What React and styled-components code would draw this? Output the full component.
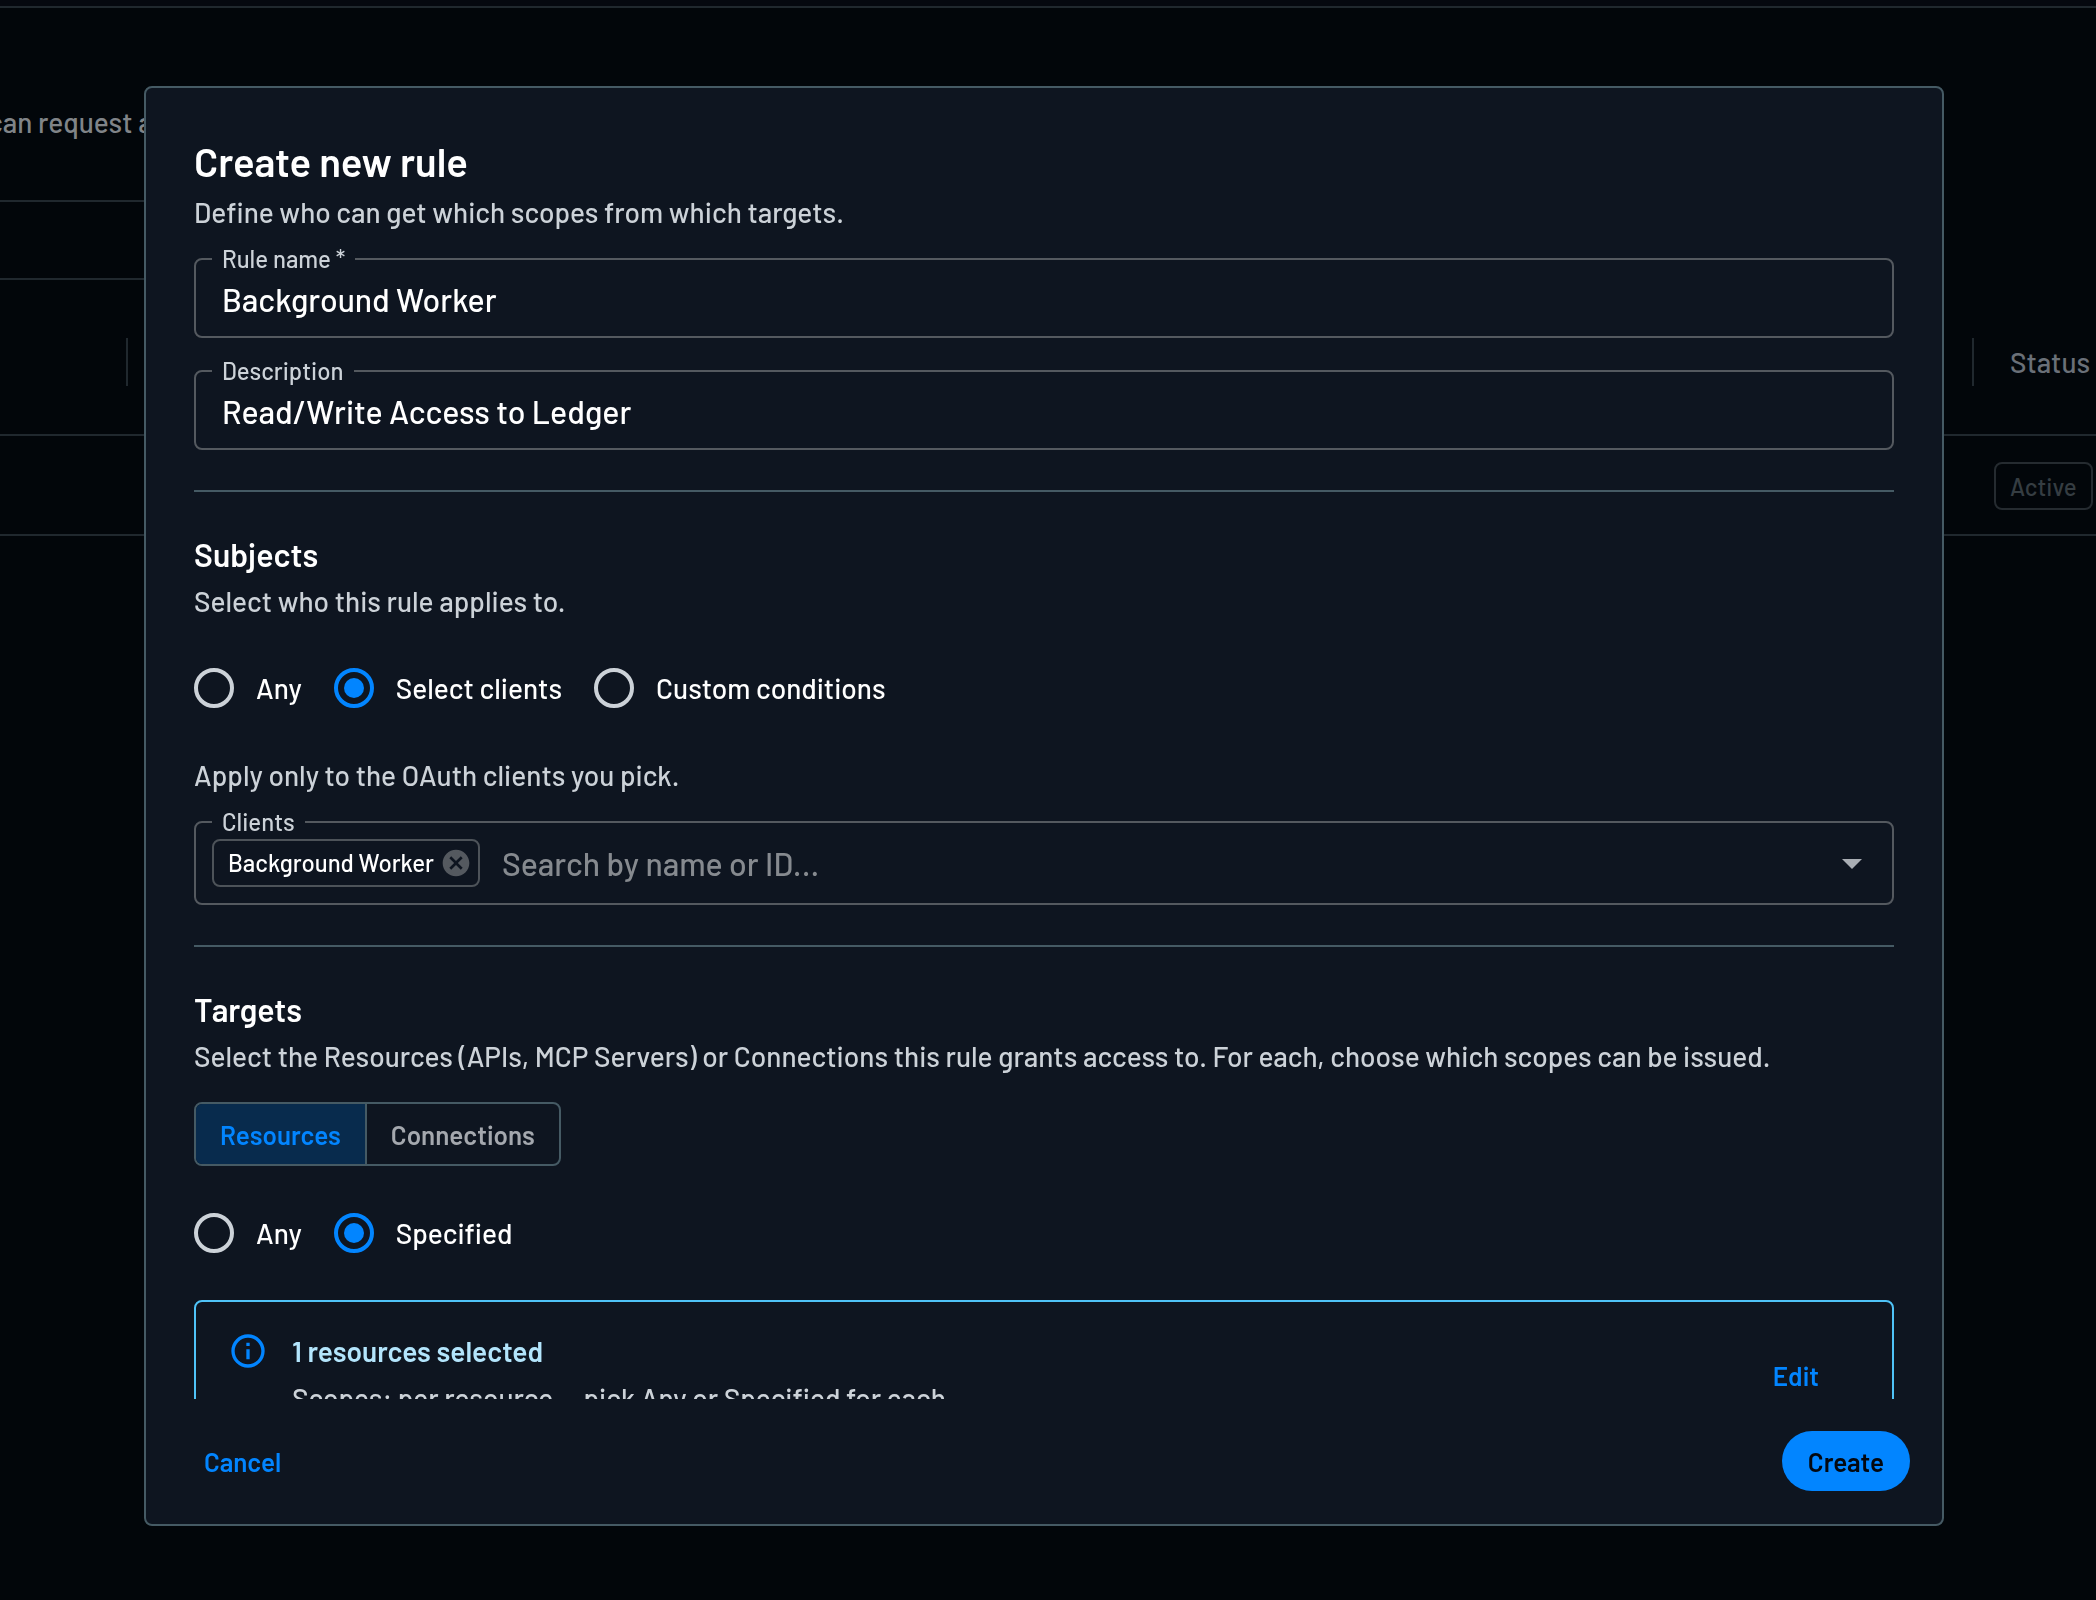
import React, { useState } from 'react';
import styled, { createGlobalStyle, css } from 'styled-components';

const colors = {
  page: '#02060a',
  paper: '#0e1520',
  line: '#455a64',
  dimLine: '#20282e',
  outline: '#54595f',
  text: '#ffffff',
  muted: '#ccd2d8',
  blue: '#0285ff',
};

function OutlinedField({ id, label, ...inputProps }) {
  return (
    <Field>
      <FieldLabel htmlFor={id}>{label}</FieldLabel>
      <FieldInput id={id} type="text" {...inputProps} />
    </Field>
  );
}

function RadioGroup({ name, legend, options, value, onChange }) {
  return (
    <RadioRow role="radiogroup" aria-label={legend}>
      {options.map((option) => (
        <RadioLabel key={option}>
          <Radio
            type="radio"
            name={name}
            checked={value === option}
            onChange={() => onChange(option)}
          />
          {option}
        </RadioLabel>
      ))}
    </RadioRow>
  );
}

function RulesPage() {
  return (
    <Page>
      <TopBar />
      <Intro>can request a</Intro>
      <Filters />
      <RulesTable>
        <thead>
          <tr>
            <HeadCell $width="128px">
              <HeadContent $divided />
            </HeadCell>
            <HeadCell>
              <HeadContent $divided />
            </HeadCell>
            <HeadCell $width="122px">
              <HeadContent>Status</HeadContent>
            </HeadCell>
          </tr>
        </thead>
        <tbody>
          <tr>
            <BodyCell />
            <BodyCell />
            <BodyCell>
              <StatusChip>Active</StatusChip>
            </BodyCell>
          </tr>
        </tbody>
      </RulesTable>
    </Page>
  );
}

function RuleDialog() {
  const [name, setName] = useState('Background Worker');
  const [description, setDescription] = useState('Read/Write Access to Ledger');
  const [subject, setSubject] = useState('Select clients');
  const [tab, setTab] = useState('Resources');
  const [target, setTarget] = useState('Specified');

  return (
    <Overlay>
      <Dialog role="dialog" aria-labelledby="dialog-title">
        <Content>
          <Title id="dialog-title">Create new rule</Title>
          <Text>Define who can get which scopes from which targets.</Text>
          <Fields>
            <OutlinedField
              id="rule-name"
              label="Rule name *"
              value={name}
              onChange={(e) => setName(e.target.value)}
            />
            <OutlinedField
              id="description"
              label="Description"
              value={description}
              onChange={(e) => setDescription(e.target.value)}
            />
          </Fields>

          <Divider />

          <SectionTitle>Subjects</SectionTitle>
          <Text>Select who this rule applies to.</Text>
          <RadioGroup
            name="subject"
            legend="Subjects"
            options={['Any', 'Select clients', 'Custom conditions']}
            value={subject}
            onChange={setSubject}
          />
          <Text>Apply only to the OAuth clients you pick.</Text>
          <ClientsField>
            <FieldLabel htmlFor="clients">Clients</FieldLabel>
            <Chip>
              Background Worker
              <ChipButton type="button" aria-label="Remove Background Worker">
                <svg viewBox="0 0 24 24" width="32" height="32" fill="currentColor">
                  <path d="M12 2C6.47 2 2 6.47 2 12s4.47 10 10 10 10-4.47 10-10S17.53 2 12 2zm5 13.59L15.59 17 12 13.41 8.41 17 7 15.59 10.59 12 7 8.41 8.41 7 12 10.59 15.59 7 17 8.41 13.41 12 17 15.59z" />
                </svg>
              </ChipButton>
            </Chip>
            <FieldInput id="clients" type="text" placeholder="Search by name or ID..." />
            <ArrowButton type="button" aria-label="Open">
              <svg viewBox="0 0 24 24" width="48" height="48" fill="currentColor">
                <path d="M7 10l5 5 5-5z" />
              </svg>
            </ArrowButton>
          </ClientsField>

          <Divider />

          <SectionTitle>Targets</SectionTitle>
          <Text>
            Select the Resources (APIs, MCP Servers) or Connections this rule grants access to. For
            each, choose which scopes can be issued.
          </Text>
          <Toggle>
            {['Resources', 'Connections'].map((item) => (
              <ToggleButton
                key={item}
                type="button"
                aria-pressed={tab === item}
                $active={tab === item}
                onClick={() => setTab(item)}>
                {item}
              </ToggleButton>
            ))}
          </Toggle>
          <RadioGroup
            name="target"
            legend="Targets"
            options={['Any', 'Specified']}
            value={target}
            onChange={setTarget}
          />
          <Alert>
            <InfoIcon viewBox="0 0 24 24">
              <path d="M11,9H13V7H11M12,20C7.59,20 4,16.41 4,12C4,7.59 7.59,4 12,4C16.41,4 20,7.59 20,12C20,16.41 16.41,20 12,20M12,2A10,10 0 0,0 2,12A10,10 0 0,0 12,22A10,10 0 0,0 22,12A10,10 0 0,0 12,2M11,17H13V11H11V17Z" />
            </InfoIcon>
            <AlertBody>
              <AlertTitle>1 resources selected</AlertTitle>
              <AlertText>Scopes: per resource — pick Any or Specified for each.</AlertText>
            </AlertBody>
            <Button type="button">Edit</Button>
          </Alert>
        </Content>
        <Actions>
          <Button type="button">Cancel</Button>
          <Button type="button" $filled>
            Create
          </Button>
        </Actions>
      </Dialog>
    </Overlay>
  );
}

function App() {
  return (
    <>
      <GlobalStyle />
      <RulesPage />
      <RuleDialog />
    </>
  );
}

const GlobalStyle = createGlobalStyle`
  * {
    box-sizing: border-box;
  }

  body {
    margin: 0;
    background: ${colors.page};
    color: ${colors.text};
    font-family: Barlow, Roboto, sans-serif;
    font-size: 28px;
    font-weight: 500;
    line-height: 40px;
  }

  button,
  input {
    font: inherit;
    color: inherit;
    background: none;
    border: 0;
    margin: 0;
    padding: 0;
  }

  h1,
  h2,
  p {
    margin: 0;
  }

  svg {
    display: block;
  }
`;

const Page = styled.main`
  min-height: 100vh;
  overflow: hidden;
`;

const TopBar = styled.header`
  height: 8px;
  background: #05080f;
  border-bottom: 2px solid ${colors.dimLine};
`;

const Intro = styled.p`
  margin: 94px 0 58px -12px;
  color: #808488;
`;

const Filters = styled.div`
  width: 60%;
  height: 80px;
  border: solid ${colors.dimLine};
  border-width: 2px 0;
`;

const RulesTable = styled.table`
  width: 100%;
  table-layout: fixed;
  border-collapse: separate;
  border-spacing: 0;
`;

const HeadCell = styled.th`
  width: ${({ $width }) => $width || 'auto'};
  padding: 58px 0 48px;
  border-bottom: 2px solid ${colors.dimLine};
  color: #6a7078;
  font-weight: 500;
  text-align: left;
`;

const HeadContent = styled.div`
  height: 48px;
  padding: 4px 0 0 36px;
  border-right: ${({ $divided }) => ($divided ? `2px solid ${colors.dimLine}` : 0)};
`;

const BodyCell = styled.td`
  height: 100px;
  padding: 2px 0 0 20px;
  border-bottom: 2px solid ${colors.dimLine};
`;

const StatusChip = styled.span`
  display: inline-block;
  padding: 5px 14px 3px;
  border: 2px solid #252b30;
  border-radius: 8px;
  color: #353d42;
  font-size: 24px;
  line-height: 36px;
  vertical-align: middle;
`;

const Overlay = styled.div`
  position: fixed;
  inset: 0;
  display: flex;
  padding: 86px 152px 74px 144px;
`;

const Dialog = styled.div`
  flex: 1;
  display: flex;
  flex-direction: column;
  min-width: 0;
  background: ${colors.paper};
  border: 2px solid ${colors.line};
  border-radius: 8px;
`;

const Content = styled.div`
  flex: 1;
  min-height: 0;
  padding: 48px 48px 0;
  overflow-y: auto;
  scrollbar-width: none;
`;

const Title = styled.h1`
  margin-bottom: 6px;
  font-size: 40px;
  font-weight: 600;
  line-height: 50px;
`;

const SectionTitle = styled.h2`
  margin-bottom: 7px;
  font-size: 32px;
  font-weight: 600;
  line-height: 40px;
`;

const Text = styled.p`
  color: ${colors.muted};
`;

const Fields = styled.div`
  display: grid;
  gap: 32px;
  margin-top: 26px;
`;

const Field = styled.div`
  position: relative;
  display: flex;
  align-items: center;
  height: 80px;
  padding: 2px 26px 0;
  border: 2px solid ${colors.outline};
  border-radius: 8px;
`;

const ClientsField = styled(Field)`
  height: 84px;
  margin-top: 26px;
  padding: 0 16px;
`;

const FieldLabel = styled.label`
  position: absolute;
  top: -15px;
  left: 16px;
  padding: 0 10px;
  background: ${colors.paper};
  color: ${colors.muted};
  font-size: 24px;
  line-height: 28px;
`;

const FieldInput = styled.input`
  flex: 1;
  min-width: 0;
  font-size: 32px;
  outline: none;

  &::placeholder {
    color: #868a8f;
    opacity: 1;
  }
`;

const Chip = styled.span`
  display: flex;
  align-items: center;
  gap: 6px;
  height: 48px;
  margin-right: 22px;
  padding: 0 6px 0 14px;
  border: 2px solid #4d5359;
  border-radius: 8px;
  font-size: 24px;
`;

const ChipButton = styled.button`
  color: #54595f;
  cursor: pointer;
`;

const ArrowButton = styled.button`
  color: #a9aeb4;
  cursor: pointer;
`;

const Divider = styled.hr`
  height: 2px;
  margin: 40px 0 42px;
  border: 0;
  background: ${colors.line};
`;

const RadioRow = styled.div`
  display: flex;
  gap: 32px;
  margin: 47px 0;
`;

const RadioLabel = styled.label`
  display: flex;
  align-items: center;
  gap: 22px;
  cursor: pointer;
`;

const Radio = styled.input`
  appearance: none;
  display: grid;
  place-items: center;
  width: 40px;
  height: 40px;
  border: 4px solid ${colors.muted};
  border-radius: 50%;

  &:checked {
    border-color: ${colors.blue};
  }

  &:checked::before {
    width: 20px;
    height: 20px;
    border-radius: 50%;
    background: ${colors.blue};
    content: '';
  }
`;

const Toggle = styled.div`
  display: flex;
  width: fit-content;
  margin-top: 26px;
  border: 2px solid ${colors.line};
  border-radius: 8px;
  overflow: hidden;
`;

const ToggleButton = styled.button`
  height: 60px;
  padding: 2px 24px 0;
  color: #a4a8ae;
  font-size: 26px;
  font-weight: 600;
  cursor: pointer;

  & + & {
    border-left: 2px solid ${colors.line};
  }

  ${({ $active }) =>
    $active &&
    css`
      background: #082b4d;
      color: ${colors.blue};
    `}
`;

const Alert = styled.div`
  display: flex;
  gap: 24px;
  padding: 29px 47px 29px 32px;
  border: 2px solid #4fc3f7;
  border-radius: 8px;
`;

const InfoIcon = styled.svg`
  width: 40px;
  height: 40px;
  fill: ${colors.blue};
`;

const AlertBody = styled.div`
  flex: 1;
`;

const AlertTitle = styled.p`
  margin-bottom: 7px;
  color: #b3e5fc;
  font-weight: 600;
`;

const AlertText = styled.p`
  color: ${colors.muted};
`;

const Button = styled.button`
  align-self: center;
  height: 60px;
  padding: 2px 26px 0;
  border-radius: 30px;
  background: ${({ $filled }) => ($filled ? colors.blue : 'none')};
  color: ${({ $filled }) => ($filled ? '#04080f' : colors.blue)};
  font-size: 26px;
  font-weight: 600;
  cursor: pointer;
`;

const Actions = styled.footer`
  display: flex;
  justify-content: space-between;
  padding: 32px 32px 33px;
`;

export default App;
